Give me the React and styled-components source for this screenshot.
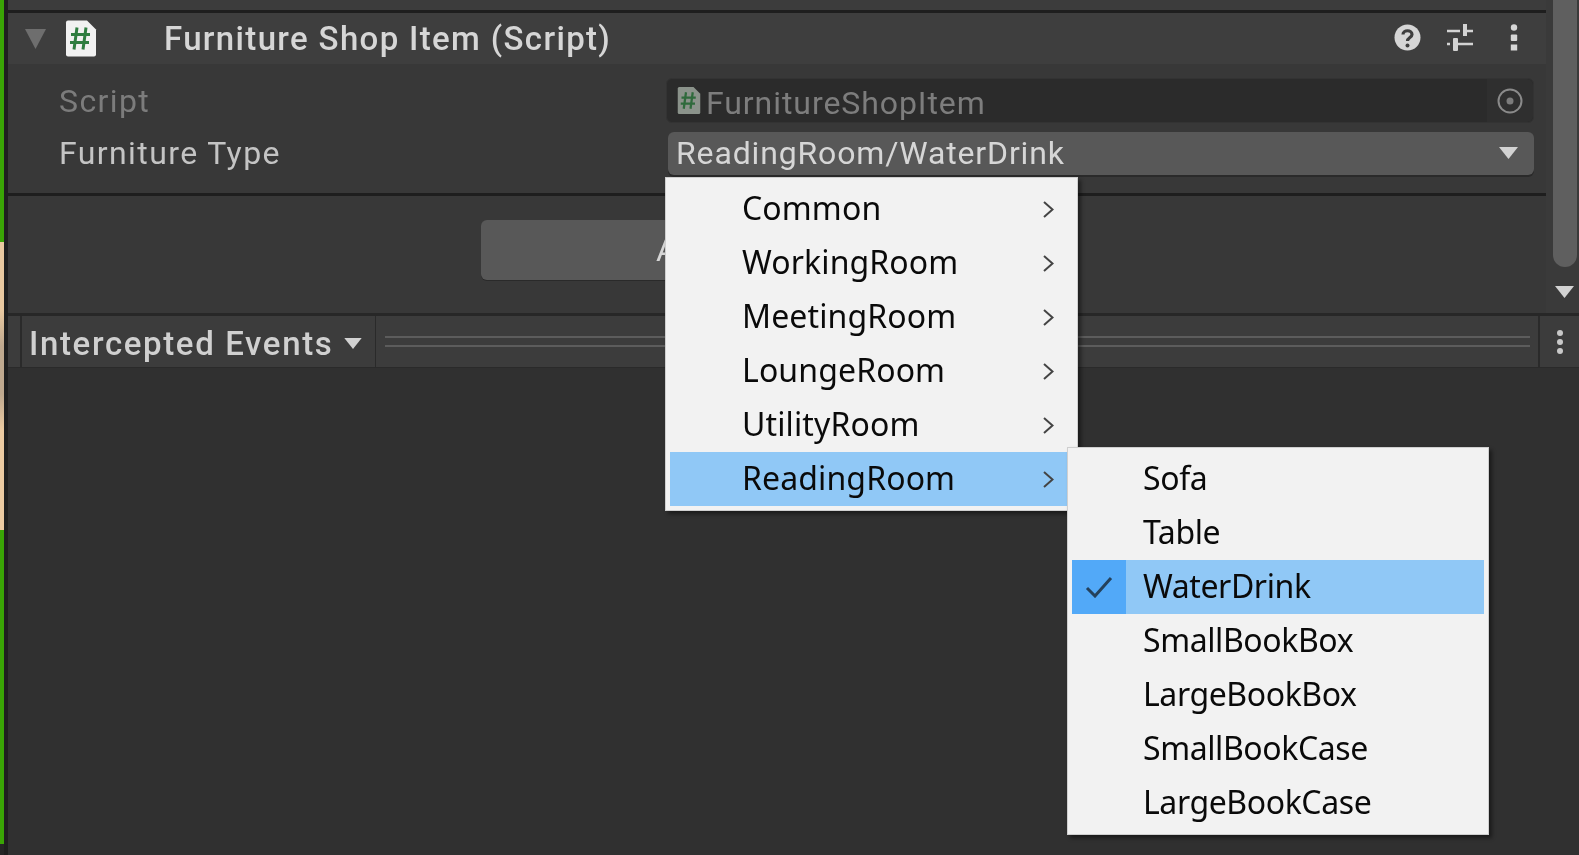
import React from 'react';
import styled, { createGlobalStyle } from 'styled-components';

const Global = createGlobalStyle`
  html, body { margin: 0; padding: 0; background: #303030; }
  #root { width: 1579px; height: 855px; overflow: hidden; }
`;

const uiFont = `Roboto, "Noto Sans", sans-serif`;
const menuFont = `"Noto Sans", "Open Sans", sans-serif`;

const Page = styled.div`
  position: relative;
  display: flex;
  width: 1579px;
  height: 855px;
  background: #303030;
  overflow: hidden;
  font-family: ${uiFont};
  filter: blur(0.45px);
`;

const SceneEdge = styled.div`
  flex: 0 0 4px;
  display: flex;
  flex-direction: column;
  background: #262626;
`;

const EdgePart = styled.div`
  height: ${p => p.$h}px;
  background: ${p => p.$c};
`;

const Divider = styled.div`
  flex: 0 0 4px;
  background: #1f1f1f;
`;

const Main = styled.div`
  flex: 1;
  display: flex;
  flex-direction: column;
  min-width: 0;
`;

const UpperArea = styled.div`
  display: flex;
  height: 313px;
`;

const Inspector = styled.div`
  flex: 0 0 1538px;
  display: flex;
  flex-direction: column;
`;

const TopStrip = styled.div`
  height: 10px;
  background: #3c3c3c;
`;

const Rule = styled.div`
  height: 3px;
  background: #1e1e1e;
`;

const ComponentHeader = styled.div`
  height: 52px;
  display: flex;
  align-items: center;
  background: #3e3e3e;
  border-bottom: 1px solid #383838;
  box-sizing: border-box;
`;

const Foldout = styled.svg`
  margin-left: 17px;
  width: 21px;
  height: 20px;
`;

const ScriptIcon = styled.svg`
  display: block;
  flex: none;
  margin-left: ${p => p.$ml || 0}px;
  width: ${p => p.$w}px;
  height: ${p => p.$h}px;
`;

const HeaderTitle = styled.div`
  margin-left: 67px;
  font-size: 33px;
  font-weight: 500;
  letter-spacing: 1.34px;
  color: #d6d6d6;
  white-space: nowrap;
`;

const HeaderTools = styled.div`
  margin-left: auto;
  display: flex;
  align-items: center;
  padding: 0 6px 2px 0;
`;

const ToolSlot = styled.div`
  width: 53px;
  display: flex;
  align-items: center;
  justify-content: center;
`;

const Fields = styled.div`
  flex: 0 0 128px;
  box-sizing: border-box;
  background: #383838;
  padding: 13px 12px 0 51px;
  display: flex;
  flex-direction: column;
  gap: 9px;
`;

const FieldRow = styled.div`
  display: flex;
  align-items: center;
  height: ${p => p.$h}px;
`;

const FieldLabel = styled.div`
  flex: 0 0 607px;
  padding-bottom: ${p => (p.$muted ? 0 : 2)}px;
  font-size: 32px;
  letter-spacing: 1.4px;
  color: ${p => (p.$muted ? '#7c7c7c' : '#c4c4c4')};
`;

const ObjectField = styled.div`
  flex: 1;
  height: 45px;
  box-sizing: border-box;
  display: flex;
  align-items: center;
  padding-left: 10px;
  background: #2b2b2b;
  border: 1px solid #333;
  border-radius: 6px;
`;

const ObjectText = styled.div`
  margin-left: 5px;
  padding-top: 5px;
  font-size: 32px;
  letter-spacing: 0.93px;
  color: #7d7d7d;
`;

const PickerCap = styled.div`
  margin-left: auto;
  width: 46px;
  height: 100%;
  display: flex;
  align-items: center;
  justify-content: center;
  background: #2f2f2f;
  border-radius: 0 6px 6px 0;
`;

const Dropdown = styled.div`
  flex: 1;
  height: 43px;
  margin-left: 2px;
  box-sizing: border-box;
  display: flex;
  align-items: center;
  justify-content: space-between;
  padding: 0 16px 2px 8px;
  background: #585858;
  border-radius: 6px;
  box-shadow: 0 2px 0 #2a2a2a;
  font-size: 32px;
  letter-spacing: 0.85px;
  color: #d6d6d6;
`;

const Section = styled.div`
  flex: 1;
  display: flex;
  align-items: center;
  box-sizing: border-box;
  padding: 0 0 9px 473px;
  background: #383838;
`;

const ActionButton = styled.div`
  width: 560px;
  height: 60px;
  box-sizing: border-box;
  padding-left: 175px;
  background: #585858;
  border-radius: 6px;
  box-shadow: 0 1px 0 #2a2a2a;
  font-size: 32px;
  color: #d6d6d6;
  display: flex;
  align-items: center;
`;

const ScrollTrack = styled.div`
  flex: 1;
  display: flex;
  flex-direction: column;
  align-items: center;
  background: #3a3a3a;
  padding-left: 4px;
`;

const ScrollThumb = styled.div`
  width: 24px;
  height: 267px;
  background: #5f5f5f;
  border-radius: 0 0 12px 12px;
`;

const ScrollArrow = styled.svg`
  margin-top: 19px;
  width: 19px;
  height: 12px;
`;

const TabBar = styled.div`
  height: 55px;
  box-sizing: border-box;
  display: flex;
  align-items: stretch;
  background: #3c3c3c;
  border-top: 3px solid #272727;
  border-bottom: 1px solid #2a2a2a;
`;

const TabGrip = styled.div`
  flex: 0 0 12px;
  border-right: 2px solid #2a2a2a;
`;

const TabTitle = styled.div`
  flex: 0 0 354px;
  box-sizing: border-box;
  padding: 4px 0 0 7px;
  display: flex;
  align-items: center;
  gap: 11px;
  border-right: 1px solid #2a2a2a;
  font-size: 33px;
  font-weight: 500;
  letter-spacing: 1.63px;
  color: #d0d0d0;
`;

const Grip = styled.div`
  flex: 1;
  margin: 0 8px 0 9px;
  align-self: center;
  height: 7px;
  border-top: 2px solid #5c5c5c;
  border-bottom: 2px solid #5c5c5c;
`;

const TabMenu = styled.div`
  flex: 0 0 41px;
  box-sizing: border-box;
  display: flex;
  align-items: center;
  justify-content: center;
  border-left: 2px solid #2a2a2a;
`;

const Body = styled.div`
  flex: 1;
  background: #303030;
`;

const Menu = styled.div`
  position: absolute;
  left: ${p => p.$x}px;
  top: ${p => p.$y}px;
  width: ${p => p.$w}px;
  box-sizing: border-box;
  padding: 4px;
  background: #f2f2f2;
  border: 1px solid #cfcfcf;
  box-shadow: 3px 3px 4px rgba(0, 0, 0, 0.45);
  font-family: ${menuFont};
  color: #0a0a0a;
`;

const MenuRow = styled.div`
  height: 54px;
  display: flex;
  align-items: center;
  background: ${p => (p.$active ? '#90c8f6' : 'transparent')};
`;

const Gutter = styled.div`
  flex: 0 0 54px;
  height: 100%;
  display: flex;
  align-items: center;
  justify-content: center;
  background: ${p => (p.$checked ? '#52a9f8' : 'transparent')};
`;

const MenuText = styled.div`
  margin-left: ${p => p.$ml}px;
  padding-bottom: 4px;
  font-size: 32px;
  letter-spacing: ${p => p.$ls}px;
`;

const Chevron = styled.svg`
  margin-left: auto;
  margin-right: 19px;
  width: 11px;
  height: 17px;
`;

const ScriptGlyph = ({ w, h, dim, ml }) => (
  <ScriptIcon $w={w} $h={h} $ml={ml} viewBox="0 0 32 36">
    <path d="M1 2 Q1 0 3 0 H22 L31 9 V34 Q31 36 29 36 H3 Q1 36 1 34 Z" fill={dim ? '#8b938b' : '#f1f1f1'} />
    <path d="M12 7 L9 29 M21 7 L18 29 M6 14 H25 M5 22 H24" stroke={dim ? '#2f6a3c' : '#2f7d40'} strokeWidth="3" fill="none" />
  </ScriptIcon>
);

const Help = () => (
  <svg width="27" height="27" viewBox="0 0 27 27">
    <circle cx="13.5" cy="13.5" r="13" fill="#d6d6d6" />
    <path d="M9 10.5 C9 5.5 18 5.5 18 10.5 C18 13.5 13.5 13.5 13.5 17" stroke="#3e3e3e" strokeWidth="3.2" fill="none" />
    <circle cx="13.5" cy="21.5" r="2" fill="#3e3e3e" />
  </svg>
);

const Sliders = () => (
  <svg width="27" height="27" viewBox="0 0 27 27">
    <path d="M0 7 H13 M20 7 H26 M8 20 H26 M0 20 H3" stroke="#d2d2d2" strokeWidth="2.4" fill="none" />
    <rect x="16" y="0" width="4" height="12" fill="#d2d2d2" />
    <rect x="6" y="14" width="5" height="13" rx="1" fill="#d2d2d2" />
  </svg>
);

const Kebab = () => (
  <svg width="8" height="27" viewBox="0 0 8 27">
    <circle cx="4" cy="3.5" r="3.2" fill="#d6d6d6" />
    <rect x="0.8" y="10.5" width="6.4" height="6.4" rx="1" fill="#d6d6d6" />
    <rect x="0.8" y="20.5" width="6.4" height="6" fill="#d6d6d6" />
  </svg>
);

const RoundKebab = () => (
  <svg width="8" height="26" viewBox="0 0 8 26">
    <circle cx="4" cy="4" r="3" fill="#c8c8c8" />
    <circle cx="4" cy="13" r="3" fill="#c8c8c8" />
    <circle cx="4" cy="22" r="3" fill="#c8c8c8" />
  </svg>
);

const Arrow = ({ w = 19, h = 12, c = '#d2d2d2' }) => (
  <svg width={w} height={h} viewBox="0 0 19 12">
    <path d="M0 0 H19 L9.5 12 Z" fill={c} />
  </svg>
);

const rooms = ['Common', 'WorkingRoom', 'MeetingRoom', 'LoungeRoom', 'UtilityRoom', 'ReadingRoom'];
const items = ['Sofa', 'Table', 'WaterDrink', 'SmallBookBox', 'LargeBookBox', 'SmallBookCase', 'LargeBookCase'];

export default function App() {
  return (
    <>
      <Global />
      <Page>
        <SceneEdge>
          <EdgePart $h={242} $c="#3aa505" />
          <EdgePart $h={68} $c="#e9c9a0" />
          <EdgePart $h={120} $c="linear-gradient(#e9c9a0, #bfa98f 30%, #bfa98f 70%, #eccba2)" />
          <EdgePart $h={100} $c="#eccba2" />
          <EdgePart $h={314} $c="#3aa505" />
        </SceneEdge>
        <Divider />
        <Main>
          <UpperArea>
            <Inspector>
              <TopStrip />
              <Rule />
              <ComponentHeader>
                <Foldout viewBox="0 0 21 20"><path d="M0 0 H21 L10.5 20 Z" fill="#6e6e6e" /></Foldout>
                <ScriptGlyph w={32} h={37} ml={19} />
                <HeaderTitle>Furniture Shop Item (Script)</HeaderTitle>
                <HeaderTools>
                  <ToolSlot><Help /></ToolSlot>
                  <ToolSlot><Sliders /></ToolSlot>
                  <ToolSlot><Kebab /></ToolSlot>
                </HeaderTools>
              </ComponentHeader>
              <Fields>
                <FieldRow $h={45}>
                  <FieldLabel $muted>Script</FieldLabel>
                  <ObjectField>
                    <ScriptGlyph w={24} h={27} dim />
                    <ObjectText>FurnitureShopItem</ObjectText>
                    <PickerCap>
                      <svg width="26" height="26" viewBox="0 0 26 26">
                        <circle cx="13" cy="13" r="11.5" fill="none" stroke="#8a8a8a" strokeWidth="2" />
                        <circle cx="13" cy="13" r="3.5" fill="#7c7c7c" />
                      </svg>
                    </PickerCap>
                  </ObjectField>
                </FieldRow>
                <FieldRow $h={43}>
                  <FieldLabel>Furniture Type</FieldLabel>
                  <Dropdown>
                    <span>ReadingRoom/WaterDrink</span>
                    <Arrow />
                  </Dropdown>
                </FieldRow>
              </Fields>
              <Rule />
              <Section>
                <ActionButton>Add</ActionButton>
              </Section>
            </Inspector>
            <ScrollTrack>
              <ScrollThumb />
              <ScrollArrow viewBox="0 0 19 12"><path d="M0 0 H19 L9.5 12 Z" fill="#d2d2d2" /></ScrollArrow>
            </ScrollTrack>
          </UpperArea>
          <TabBar>
            <TabGrip />
            <TabTitle>
              <span>Intercepted Events</span>
              <Arrow w={18} h={11} />
            </TabTitle>
            <Grip />
            <TabMenu><RoundKebab /></TabMenu>
          </TabBar>
          <Body />
        </Main>
        <Menu $x={665} $y={177} $w={413}>
          {rooms.map((r, i) => (
            <MenuRow key={r} $active={i === 5}>
              <Gutter />
              <MenuText $ml={18} $ls={0.12}>{r}</MenuText>
              <Chevron viewBox="0 0 11 17">
                <path d="M1 1 L9.5 8.5 L1 16" stroke="#444" strokeWidth="2" fill="none" />
              </Chevron>
            </MenuRow>
          ))}
        </Menu>
        <Menu $x={1067} $y={447} $w={422}>
          {items.map(t => (
            <MenuRow key={t} $active={t === 'WaterDrink'}>
              <Gutter $checked={t === 'WaterDrink'}>
                {t === 'WaterDrink' && (
                  <svg width="28" height="22" viewBox="0 0 28 22">
                    <path d="M2 12 L10 20 L26 2" stroke="#24415c" strokeWidth="3" fill="none" />
                  </svg>
                )}
              </Gutter>
              <MenuText $ml={17} $ls={-0.4}>{t}</MenuText>
            </MenuRow>
          ))}
        </Menu>
      </Page>
    </>
  );
}
